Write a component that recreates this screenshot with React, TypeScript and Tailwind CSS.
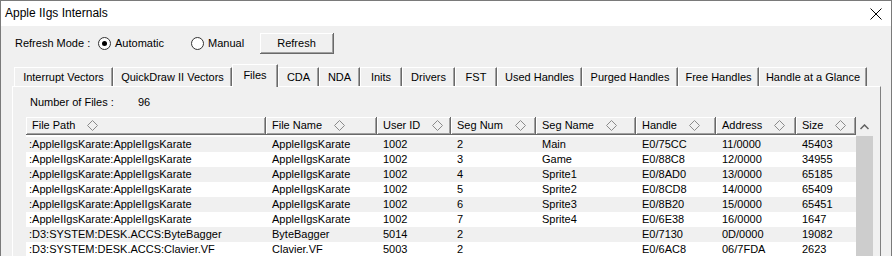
import React from 'react';

const tabs = [
  { label: 'Interrupt Vectors', w: 'w-[99px]' },
  { label: 'QuickDraw II Vectors', w: 'w-[119px]' },
  { label: 'Files', w: 'w-[46px]', active: true },
  { label: 'CDA', w: 'w-[41px]' },
  { label: 'NDA', w: 'w-[41px]' },
  { label: 'Inits', w: 'w-[42px]' },
  { label: 'Drivers', w: 'w-[53px]' },
  { label: 'FST', w: 'w-[42px]' },
  { label: 'Used Handles', w: 'w-[85px]' },
  { label: 'Purged Handles', w: 'w-[96px]' },
  { label: 'Free Handles', w: 'w-[81px]' },
  { label: 'Handle at a Glance', w: 'w-[108px]' },
];

const columns = [
  { label: 'File Path', w: 'w-[240px]' },
  { label: 'File Name', w: 'w-[111px]' },
  { label: 'User ID', w: 'w-[74px]' },
  { label: 'Seg Num', w: 'w-[85px]' },
  { label: 'Seg Name', w: 'w-[100px]' },
  { label: 'Handle', w: 'w-[80px]' },
  { label: 'Address', w: 'w-[80px]' },
  { label: 'Size', w: 'w-[60px]' },
];

const karate = ':AppleIIgsKarate:AppleIIgsKarate';

const rows = [
  [karate, 'AppleIIgsKarate', '1002', '2', 'Main', 'E0/75CC', '11/0000', '45403'],
  [karate, 'AppleIIgsKarate', '1002', '3', 'Game', 'E0/88C8', '12/0000', '34955'],
  [karate, 'AppleIIgsKarate', '1002', '4', 'Sprite1', 'E0/8AD0', '13/0000', '65185'],
  [karate, 'AppleIIgsKarate', '1002', '5', 'Sprite2', 'E0/8CD8', '14/0000', '65409'],
  [karate, 'AppleIIgsKarate', '1002', '6', 'Sprite3', 'E0/8B20', '15/0000', '65451'],
  [karate, 'AppleIIgsKarate', '1002', '7', 'Sprite4', 'E0/6E38', '16/0000', '1647'],
  [':D3:SYSTEM:DESK.ACCS:ByteBagger', 'ByteBagger', '5014', '2', '', 'E0/7130', '0D/0000', '19082'],
  [':D3:SYSTEM:DESK.ACCS:Clavier.VF', 'Clavier.VF', '5003', '2', '', 'E0/6AC8', '06/7FDA', '2623'],
];

function Diamond() {
  return (
    <svg width="11" height="11" viewBox="0 0 11 11" className="ml-[12px] shrink-0">
      <path d="M5.5 0.5 L10.5 5.5 L5.5 10.5 L0.5 5.5 Z" fill="none" stroke="#8a8a8a" strokeWidth="1" />
    </svg>
  );
}

function Radio({ checked }: { checked?: boolean }) {
  return (
    <span className="w-[13px] h-[13px] rounded-full border border-[#333] bg-white flex items-center justify-center shrink-0">
      {checked && <span className="w-[5px] h-[5px] rounded-full bg-black" />}
    </span>
  );
}

export default function App() {
  return (
    <div className="w-[892px] h-[256px] overflow-hidden bg-[#f0f0f0] border-t border-l border-r border-[#7a7a7a] font-['Liberation_Sans',Arial,sans-serif] text-[11px] text-black leading-[13px]">
      {/* title bar */}
      <div className="h-[25px] bg-white flex items-center justify-between pl-[4px] pr-[9px]">
        <span className="text-[12px]">Apple IIgs Internals</span>
        <svg width="12" height="12" viewBox="0 0 12 12">
          <path d="M0.5 0.5 L11.5 11.5 M11.5 0.5 L0.5 11.5" stroke="#000" strokeWidth="1" />
        </svg>
      </div>

      {/* refresh mode row */}
      <div className="mt-[7px] h-[21px] flex items-center pl-[14px]">
        <span className="w-[83px]">Refresh Mode :</span>
        <Radio checked />
        <span className="ml-[4px] w-[76px]">Automatic</span>
        <Radio />
        <span className="ml-[4px] w-[52px]">Manual</span>
        <button className="w-[74px] h-[21px] bg-[#f0f0f0] border-r border-b border-[#696969] shadow-[inset_1px_1px_0_#fff,inset_-1px_-1px_0_#a0a0a0] text-[11px]">
          Refresh
        </button>
      </div>

      {/* tabs */}
      <div className="mt-[10px] pl-[13px] h-[23px] mb-[-1px] flex items-end relative z-10">
        {tabs.map((t) =>
          t.active ? (
            <div
              key={t.label}
              className={`${t.w} h-[23px] bg-[#f0f0f0] border-t border-l border-white border-r border-r-[#696969] shadow-[inset_-1px_0_0_#a0a0a0] flex justify-center pt-[4px]`}
            >
              {t.label}
            </div>
          ) : (
            <div
              key={t.label}
              className={`${t.w} h-[19px] mb-[1px] bg-[#f0f0f0] border-t border-l border-white border-r border-r-[#696969] shadow-[inset_-1px_0_0_#a0a0a0] flex items-center justify-center`}
            >
              {t.label}
            </div>
          )
        )}
      </div>

      {/* tab panel */}
      <div className="ml-[11px] w-[869px] h-[200px] border-t border-l border-white border-r border-r-[#808080] pl-[13px] pt-[9px]">
        <div className="flex pl-[4px]">
          <span className="w-[108px]">Number of Files :</span>
          <span>96</span>
        </div>

        <div className="mt-[8px] flex w-[848px]">
          <div className="w-[830px] bg-white">
            <div className="flex h-[18px]">
              {columns.map((c) => (
                <div
                  key={c.label}
                  className={`${c.w} h-[18px] bg-[#f0f0f0] border-r border-b border-[#696969] shadow-[inset_1px_1px_0_#fff,inset_-1px_-1px_0_#a0a0a0] flex items-center pl-[6px]`}
                >
                  <span>{c.label}</span>
                  <Diamond />
                </div>
              ))}
            </div>
            <div className="pt-[2px]">
              {rows.map((r, i) => (
                <div key={i} className={`flex h-[15px] items-center ${i % 2 === 0 ? 'bg-[#f0f0f0]' : 'bg-white'}`}>
                  {r.map((cell, j) => (
                    <div
                      key={j}
                      className={`${columns[j].w} whitespace-nowrap overflow-hidden ${j === 0 ? 'pl-[3px]' : 'pl-[6px]'}`}
                    >
                      {cell}
                    </div>
                  ))}
                </div>
              ))}
            </div>
          </div>

          {/* vertical scrollbar */}
          <div className="w-[17px] flex flex-col bg-[#f0f0f0]">
            <div className="h-[19px] flex items-center justify-center">
              <svg width="9" height="6" viewBox="0 0 9 6">
                <path d="M0.5 5 L4.5 1 L8.5 5" fill="none" stroke="#606060" strokeWidth="1.5" />
              </svg>
            </div>
            <div className="flex-1 bg-[#cdcdcd]" />
          </div>
        </div>
      </div>
    </div>
  );
}
